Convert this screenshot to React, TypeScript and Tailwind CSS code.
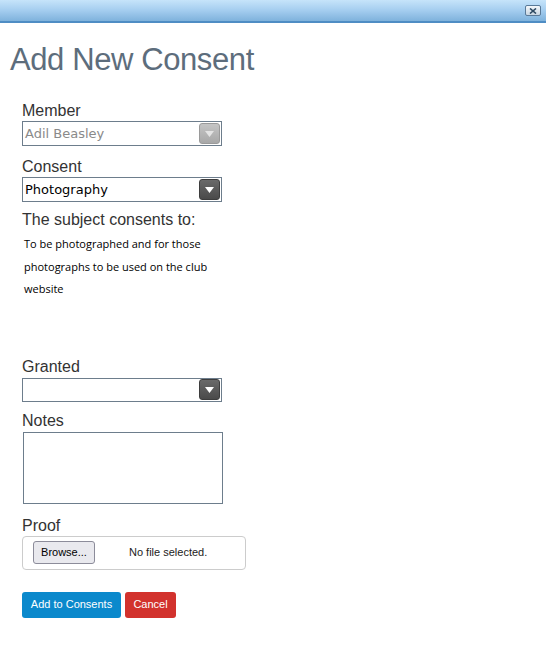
const Arrow = ({ tone }: { tone: "light" | "dark" }) => (
  <div
    className={`flex h-[21px] w-[21px] items-center justify-center rounded-[3px] border ${
      tone === "light"
        ? "border-[#9a9a9a] bg-gradient-to-b from-[#c4c4c4] to-[#a8a8a8]"
        : "border-[#3d3d3d] bg-gradient-to-b from-[#6a6a6a] to-[#4a4a4a]"
    }`}
  >
    <svg width="9" height="6" viewBox="0 0 9 6">
      <path d="M0 0h9L4.5 6z" fill={tone === "light" ? "#e4e4e4" : "#ffffff"} />
    </svg>
  </div>
);

const Label = ({ children }: { children: React.ReactNode }) => (
  <div className="text-[16px] leading-[18px] text-[#333]">{children}</div>
);

const Select = ({ value, tone, muted }: { value: string; tone: "light" | "dark"; muted?: boolean }) => (
  <div className="flex h-[25px] w-[200px] items-center justify-between border border-[#6d7d8c] bg-white pl-[2px] pr-[1px]">
    <span
      className={`text-[13px] ${muted ? "text-[#8a8a8a]" : "text-black"}`}
      style={{ fontFamily: '"DejaVu Sans", Verdana, sans-serif' }}
    >
      {value}
    </span>
    <Arrow tone={tone} />
  </div>
);

export default function App() {
  return (
    <div
      className="h-[648px] w-[546px] bg-white"
      style={{ fontFamily: '"Liberation Sans", Arial, sans-serif' }}
    >
      <div className="flex h-[23px] items-center justify-end border-b-2 border-[#4f8dc4] bg-gradient-to-b from-[#c6e4fa] via-[#a4cdef] to-[#7fb2dc] pr-[5px]">
        <div className="flex h-[11px] w-[16px] items-center justify-center rounded-[2px] border border-[#5a7a98] bg-gradient-to-b from-[#f4f8fb] to-[#c9d6e2]">
          <svg width="8" height="6" viewBox="0 0 8 6">
            <path d="M1 0.5l6 5M7 0.5l-6 5" stroke="#2e4a63" strokeWidth="1.6" />
          </svg>
        </div>
      </div>

      <h1 className="ml-[10px] mt-[18px] text-[31px] leading-[38px] tracking-[-0.4px] text-[#5d6d7c]">
        Add New Consent
      </h1>

      <div className="ml-[22px] mt-[23px] flex flex-col">
        <Label>Member</Label>
        <div className="mt-[1px]">
          <Select value="Adil Beasley" tone="light" muted />
        </div>

        <div className="mt-[12px]">
          <Label>Consent</Label>
        </div>
        <div className="mt-[1px]">
          <Select value="Photography" tone="dark" />
        </div>

        <div className="mt-[9px]">
          <Label>The subject consents to:</Label>
        </div>
        <div
          className="mt-[4px] w-[200px] pl-[2px] text-[11px] leading-[22.5px] text-black"
          style={{ fontFamily: '"Open Sans", sans-serif' }}
        >
          To be photographed and for those photographs to be used on the club website
        </div>

        <div className="mt-[57px]">
          <Label>Granted</Label>
        </div>
        <div className="mt-[2px] flex h-[24px] w-[200px] items-center justify-end border border-[#6d7d8c] bg-white pr-[1px]">
          <Arrow tone="dark" />
        </div>

        <div className="mt-[10px]">
          <Label>Notes</Label>
        </div>
        <div className="ml-[1px] mt-[2px] h-[72px] w-[200px] border border-[#6d7d8c] bg-white" />

        <div className="mt-[13px]">
          <Label>Proof</Label>
        </div>
        <div className="mt-[1px] flex h-[34px] w-[224px] items-center rounded-[4px] border border-[#cccccc] pl-[10px]">
          <div className="flex h-[23px] w-[62px] items-center justify-center rounded-[3px] border border-[#8c8c9a] bg-[#e9e9ee] text-[11px] text-black">
            Browse...
          </div>
          <span className="ml-[34px] text-[11px] text-[#222]">No file selected.</span>
        </div>

        <div className="mt-[22px] flex gap-[4px]">
          <div className="flex h-[26px] w-[99px] items-center justify-center rounded-[3px] bg-[#0b89cc] text-[11px] text-white">
            Add to Consents
          </div>
          <div className="flex h-[26px] w-[51px] items-center justify-center rounded-[3px] bg-[#d2322d] text-[11px] text-white">
            Cancel
          </div>
        </div>
      </div>
    </div>
  );
}
